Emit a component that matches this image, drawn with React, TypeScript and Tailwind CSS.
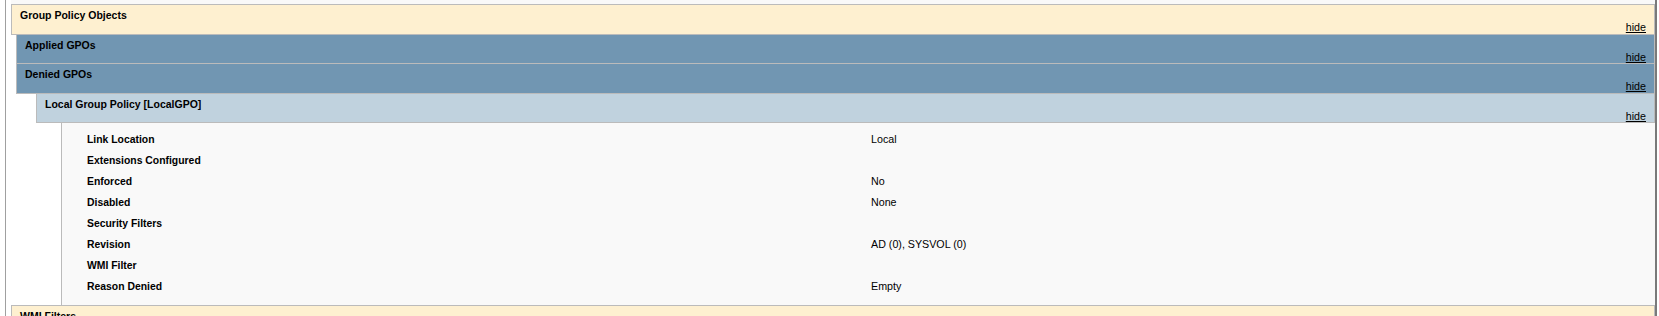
import React from 'react';

type BarProps = {
  title: string;
  bg: string;
  h: string;
};

const rows: { label: string; value: string }[] = [
  { label: 'Link Location', value: 'Local' },
  { label: 'Extensions Configured', value: '' },
  { label: 'Enforced', value: 'No' },
  { label: 'Disabled', value: 'None' },
  { label: 'Security Filters', value: '' },
  { label: 'Revision', value: 'AD (0), SYSVOL (0)' },
  { label: 'WMI Filter', value: '' },
  { label: 'Reason Denied', value: 'Empty' },
];

const Bar: React.FC<BarProps> = ({ title, bg, h }) => (
  <div className={`flex flex-col border border-[#bbbbbb] -mt-px pl-[8px] pr-[8px] pt-[4px] ${bg} ${h}`}>
    <span className="text-[10.5px] leading-[12px] font-bold whitespace-nowrap">{title}</span>
    <a href="#" className="self-end text-[10.7px] leading-[12px] text-black underline">
      hide
    </a>
  </div>
);

const App: React.FC = () => {
  return (
    <div className="w-[1659px] h-[316px] overflow-hidden bg-white text-black font-['Liberation_Sans',Arial,sans-serif]">
      <div className="ml-[5px] mr-[2px] h-full border-l border-l-[#a0a0a0] border-r-2 border-r-[#7a7a7a] pl-[5px]">
        <div className="h-[5px] bg-[#f9f9f9]" />

        <Bar title="Group Policy Objects" bg="bg-[#fef0d0]" h="h-[31px]" />

        <div className="ml-[5px]">
          <Bar title="Applied GPOs" bg="bg-[#7196b2]" h="h-[30px]" />
          <Bar title="Denied GPOs" bg="bg-[#7196b2]" h="h-[31px]" />

          <div className="ml-[20px]">
            <Bar title="Local Group Policy [LocalGPO]" bg="bg-[#c0d2de]" h="h-[30px]" />

            <div className="ml-[25px] h-[183px] border-l border-b border-[#bbbbbb] bg-[#f9f9f9] pl-[25px] pt-[6px]">
              {rows.map((r) => (
                <div key={r.label} className="grid grid-cols-[784px_1fr] h-[21px] items-center">
                  <span className="text-[10.4px] font-bold whitespace-nowrap">{r.label}</span>
                  <span className="text-[10.7px] whitespace-nowrap">{r.value}</span>
                </div>
              ))}
            </div>
          </div>
        </div>

        <Bar title="WMI Filters" bg="bg-[#fef0d0]" h="h-[31px]" />
      </div>
    </div>
  );
};

export default App;
